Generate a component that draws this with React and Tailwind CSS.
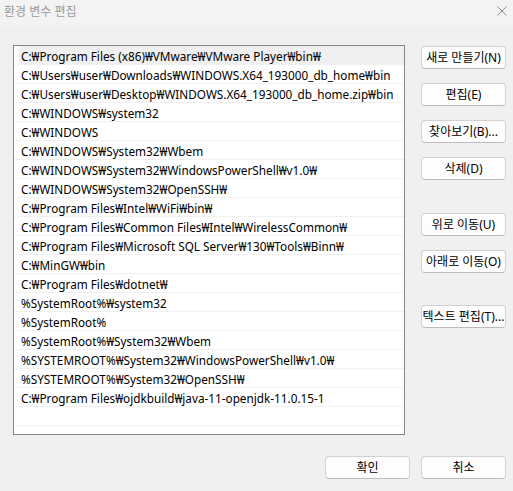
import React from 'react';

const paths = [
  'C:₩Program Files (x86)₩VMware₩VMware Player₩bin₩',
  'C:₩Users₩user₩Downloads₩WINDOWS.X64_193000_db_home₩bin',
  'C:₩Users₩user₩Desktop₩WINDOWS.X64_193000_db_home.zip₩bin',
  'C:₩WINDOWS₩system32',
  'C:₩WINDOWS',
  'C:₩WINDOWS₩System32₩Wbem',
  'C:₩WINDOWS₩System32₩WindowsPowerShell₩v1.0₩',
  'C:₩WINDOWS₩System32₩OpenSSH₩',
  'C:₩Program Files₩Intel₩WiFi₩bin₩',
  'C:₩Program Files₩Common Files₩Intel₩WirelessCommon₩',
  'C:₩Program Files₩Microsoft SQL Server₩130₩Tools₩Binn₩',
  'C:₩MinGW₩bin',
  'C:₩Program Files₩dotnet₩',
  '%SystemRoot%₩system32',
  '%SystemRoot%',
  '%SystemRoot%₩System32₩Wbem',
  '%SYSTEMROOT%₩System32₩WindowsPowerShell₩v1.0₩',
  '%SYSTEMROOT%₩System32₩OpenSSH₩',
  'C:₩Program Files₩ojdkbuild₩java-11-openjdk-11.0.15-1',
  '',
];

const font = { fontFamily: '"Noto Sans", "Noto Sans CJK KR", sans-serif' };

const Button = ({ children, className = '' }) => (
  <button
    className={`h-[23px] w-[85px] rounded-[4px] border border-[#d1d1d1] border-b-[#bcbcbc] bg-[#fdfdfd] text-[12px] leading-none text-black whitespace-nowrap ${className}`}
  >
    {children}
  </button>
);

export default function App() {
  return (
    <div className="w-[513px] h-[491px] bg-[#f0f0f0] flex flex-col" style={font}>
      {/* Title bar */}
      <div className="h-[26px] bg-[#f3f3f3] flex items-center justify-between pl-[4px] pr-[3px]">
        <span className="text-[12px] text-[#999999] -mt-[3px]">환경 변수 편집</span>
        <svg width="10" height="10" viewBox="0 0 10 10" className="mr-[3px] -mt-[5px]">
          <path d="M0.5 0.5 L9.5 9.5 M9.5 0.5 L0.5 9.5" stroke="#8a8a8a" strokeWidth="1" />
        </svg>
      </div>

      {/* Body */}
      <div className="flex pl-[13px] pt-[19px]">
        <div className="w-[392px] h-[390px] border border-[#828790] bg-white overflow-hidden">
          {paths.map((p, i) => (
            <div key={i} className="h-[19px] pl-[2px] border-b border-[#f0f0f0]">
              <div
                className={
                  i === 0
                    ? 'h-full flex items-center pt-[3px] ml-[3px] pl-[2px] bg-[#f0f0f0] text-[11.75px] text-black whitespace-nowrap'
                    : 'h-full flex items-center pt-[3px] pl-[5px] text-[11.75px] text-black whitespace-nowrap'
                }
              >
                {p}
              </div>
            </div>
          ))}
        </div>

        <div className="ml-[16px] flex flex-col pt-[1px]">
          <Button>새로 만들기(N)</Button>
          <Button className="mt-[14px]">편집(E)</Button>
          <Button className="mt-[14px]">찾아보기(B)...</Button>
          <Button className="mt-[14px]">삭제(D)</Button>
          <Button className="mt-[33px]">위로 이동(U)</Button>
          <Button className="mt-[14px]">아래로 이동(O)</Button>
          <Button className="mt-[32px]">텍스트 편집(T)...</Button>
        </div>
      </div>

      {/* Footer */}
      <div className="flex justify-end gap-[11px] pr-[7px] mt-[21px]">
        <Button>확인</Button>
        <Button>취소</Button>
      </div>
    </div>
  );
}
